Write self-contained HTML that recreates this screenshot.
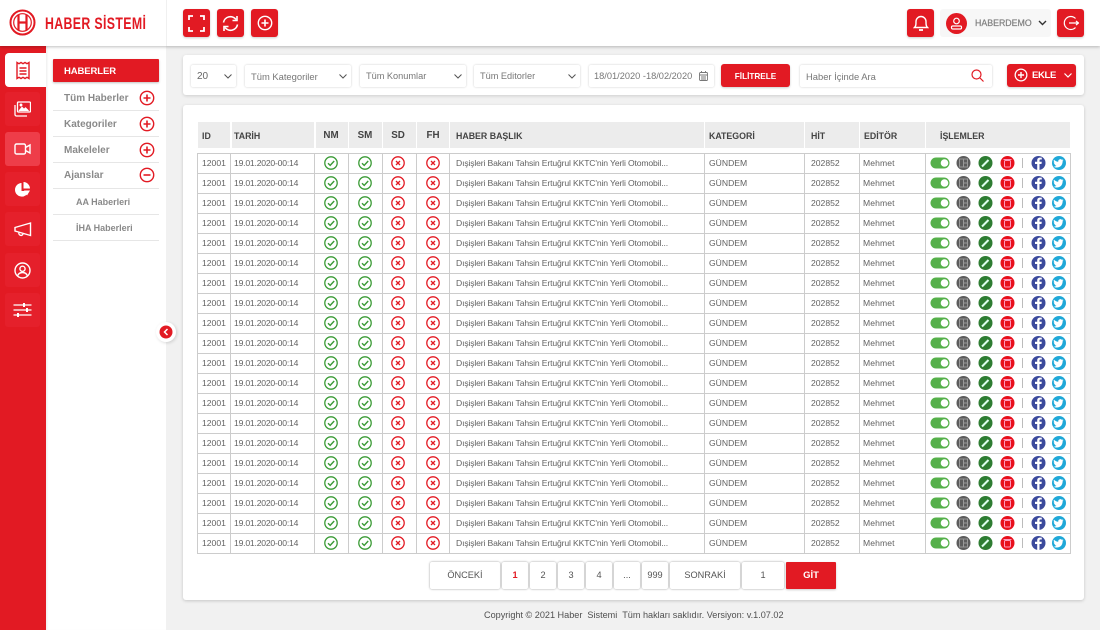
<!DOCTYPE html>
<html lang="tr"><head><meta charset="utf-8"><title>Haber Sistemi</title>
<style>
*{box-sizing:border-box}
html,body{margin:0;padding:0}
body{width:1100px;height:630px;position:relative;overflow:hidden;background:#f1f1f1;font-family:"Liberation Sans",sans-serif;color:#666;font-size:9px}
.a{position:absolute}
.rb{position:absolute;background:#e21a23;border-radius:3px;box-shadow:0 1px 2px rgba(0,0,0,.2);display:flex;align-items:center;justify-content:center}
.f{position:absolute;top:65px;height:22px;background:#fff;border-radius:2px;box-shadow:0 0 2px rgba(0,0,0,.2);line-height:23px;padding-left:6px;font-size:9.2px;color:#777;white-space:nowrap}
.si{position:absolute;left:5px;width:35px;height:34px;background:#e5202b;border-radius:3px;display:flex;align-items:center;justify-content:center}
.m{position:absolute;left:64px;font-size:10px;font-weight:bold;color:#8a8a8a;line-height:14px;white-space:nowrap}
.d{position:absolute;left:53px;width:106px;height:1.5px;background:#e6e6e6}
.th{position:absolute;top:122px;height:26px;background:#ececec;font-weight:bold;font-size:8.8px;line-height:28px;color:#444;white-space:nowrap}
.n{font-size:9.8px}
table{position:absolute;left:197px;top:153px;width:873px;border-collapse:collapse;table-layout:fixed;font-size:8.6px;color:#626262}
td{height:20px;padding:0 0 2px 4px;border:1px solid #ccc;white-space:nowrap;overflow:hidden;line-height:16px}
td.c{padding:0 0 2px 0;text-align:center}
td svg{display:block;margin:auto}
td:nth-child(2){padding-left:3px;letter-spacing:-.2px}
td:nth-child(3) svg,td:nth-child(4) svg{transform:translateX(-1px)}
td:nth-child(5) svg{transform:translateX(-2px)}
td:nth-child(7){padding-left:6px;letter-spacing:-.14px}
td:nth-child(9){padding-left:6px}
td:nth-child(10){padding-left:3px;letter-spacing:.1px}
.p{position:absolute;top:562px;height:27px;background:#fff;border-radius:2px;box-shadow:0 0 2px rgba(0,0,0,.4);text-align:center;line-height:27px;font-size:9.2px;color:#555}
</style></head><body>
<svg width="0" height="0" style="position:absolute">
<symbol id="ok" viewBox="0 0 14 14"><circle cx="7" cy="7" r="6.200" fill="none" stroke="#3a9a35" stroke-width="1.300"/><path d="M4 7.200l2.200 2.200L10.200 5" fill="none" stroke="#3a9a35" stroke-width="1.400"/></symbol>
<symbol id="no" viewBox="0 0 14 14"><circle cx="7" cy="7" r="6.200" fill="none" stroke="#e21a23" stroke-width="1.300"/><path d="M5 5l4 4M9 5l-4 4" fill="none" stroke="#e21a23" stroke-width="1.300"/></symbol>
<symbol id="ops" viewBox="0 0 144 16">
<rect x="4.500" y="2.500" width="19" height="11" rx="5.500" fill="#55b04a"/><circle cx="18.500" cy="8" r="3.800" fill="#fff"/>
<circle cx="37.500" cy="8" r="7" fill="#5c5c5c"/><rect x="33.500" y="4" width="8" height="8" fill="none" stroke="#999" stroke-width="1"/><path d="M37.500 4v8M37.500 8h4" stroke="#999" stroke-width="1"/>
<circle cx="59.500" cy="8" r="7" fill="#2e7d32"/><path d="M56 11.500l6.500-6.500" stroke="#dfe" stroke-width="2"/>
<circle cx="81.500" cy="8" r="7" fill="#e8101c"/><rect x="78.500" y="5.500" width="6" height="6.500" rx="1" fill="none" stroke="#f9b" stroke-width="1"/><path d="M77.500 4.500h8" stroke="#f9b" stroke-width="1"/>
<rect x="96" y="3" width="1" height="10" fill="#bbb"/>
<circle cx="112.500" cy="8" r="7" fill="#3b4a9c"/><path d="M113.500 15v-6h2l.3-2.200h-2.300V5.500c0-.7.300-1 1-1h1.300V2.600h-1.800c-2 0-2.800 1.200-2.800 2.800v1.400H109V9h2.200v6z" fill="#fff"/>
<circle cx="133" cy="8" r="7" fill="#1fa8d8"/><path d="M137.500 5.300c-.4.200-.8.300-1.200.3.400-.3.800-.7.900-1.200-.4.200-.9.400-1.300.5a2.100 2.100 0 0 0-3.600 1.900c-1.700-.1-3.300-.9-4.300-2.200-.6 1-.3 2.200.6 2.800-.3 0-.6-.1-.9-.2 0 1 .7 1.900 1.700 2.100-.3.100-.6.100-.9 0 .3.800 1 1.400 1.900 1.400-.9.700-2 1-3 .9 3.900 2.300 9.300.3 9.200-5.200.3-.2.700-.6.900-1.100z" fill="#fff"/>
</symbol>
<symbol id="plus" viewBox="0 0 16 16"><circle cx="8" cy="8" r="6.700" fill="none" stroke="#e21a23" stroke-width="1.400"/><path d="M4.500 8h7M8 4.500v7" stroke="#e21a23" stroke-width="1.600"/></symbol>
<symbol id="wplus" viewBox="0 0 16 16"><circle cx="8" cy="8" r="6.700" fill="none" stroke="#fff" stroke-width="1.400"/><path d="M4.500 8h7M8 4.500v7" stroke="#fff" stroke-width="1.600"/></symbol>
</svg>

<!-- Sidebar -->
<div class="a" style="left:0;top:46px;width:46px;height:584px;background:#e21a23"></div>
<div class="a" style="left:5px;top:53px;width:41px;height:34px;background:#fff;border-radius:4px 0 0 4px"></div>
<svg class="a" style="left:15px;top:61px" width="16" height="19" viewBox="0 0 16 19" fill="none" stroke="#e21a23" stroke-width="1.400"><path d="M2 1.500l2 1.200 2-1.200 2 1.200 2-1.200 2 1.200 2-1.200v16l-2-1.200-2 1.200-2-1.200-2 1.200-2-1.200-2 1.200z"/><path d="M4.500 7h7M4.500 10h7M4.500 13h7"/></svg>
<div class="si" style="top:92px"><svg width="17" height="16" viewBox="0 0 17 16" fill="none" stroke="#fff" stroke-width="1.300"><rect x="3.500" y="1" width="13" height="10" rx="1"/><path d="M1 4v9.500a1.500 1.500 0 0 0 1.500 1.500H13"/><path d="M5 10l3-3.500 2 2 1.500-1.500 3 3" fill="#fff"/><circle cx="7" cy="4" r=".8" fill="#fff"/></svg></div>
<div class="si" style="top:132px;background:#ee3d49"><svg width="17" height="12" viewBox="0 0 17 12" fill="none" stroke="#fff" stroke-width="1.400"><rect x="1" y="1" width="10.500" height="10" rx="1.500"/><path d="M11.500 4.500L16 2v8l-4.500-2.500"/></svg></div>
<div class="si" style="top:172px"><svg width="17" height="17" viewBox="0 0 17 17"><path d="M7.500 2a6.800 6.800 0 1 0 7 8H7.500z" fill="#fff"/><path d="M9.500 1a6.800 6.800 0 0 1 6.500 6.500H9.500z" fill="#fff"/><path d="M10 9.500h6l-3 5z" fill="#fff"/></svg></div>
<div class="si" style="top:212px"><svg width="18" height="15" viewBox="0 0 18 15" fill="none" stroke="#fff" stroke-width="1.400"><path d="M1 5.500l15.500-4.500v12.500L1 9z"/><path d="M5 10.500a2 2 0 0 0 4 1.500"/></svg></div>
<div class="si" style="top:253px"><svg width="17" height="17" viewBox="0 0 17 17" fill="none" stroke="#fff" stroke-width="1.400"><circle cx="8.500" cy="8.500" r="7.500"/><circle cx="8.500" cy="6.800" r="2.600"/><path d="M3.500 14c1-3 3-3.500 5-3.500s4 .5 5 3.500"/></svg></div>
<div class="si" style="top:293px"><svg width="19" height="16" viewBox="0 0 19 16" stroke="#fff" stroke-width="1.300"><path d="M.5 3h18M.5 8h18M.5 13h18"/><path d="M11 1v4M14 6v4M5 11v4" stroke-width="2"/></svg></div>

<!-- Sub panel -->
<div class="a" style="left:46px;top:46px;width:120px;height:584px;background:#fff;box-shadow:inset 2px 0 2px -1px rgba(0,0,0,.08)"></div>
<div class="a" style="left:53px;top:59px;width:106px;height:23px;background:#e21a23;border-radius:1px;box-shadow:0 1px 2px rgba(0,0,0,.25);color:#fff;font-weight:bold;font-size:9.500px;letter-spacing:-.1px;line-height:25px;padding-left:11px">HABERLER</div>
<div class="m" style="top:92px">Tüm Haberler</div><svg class="a" style="left:139px;top:90px" width="16" height="16"><use href="#plus"/></svg><div class="d" style="top:109.500px"></div>
<div class="m" style="top:118px">Kategoriler</div><svg class="a" style="left:139px;top:116px" width="16" height="16"><use href="#plus"/></svg><div class="d" style="top:135.500px"></div>
<div class="m" style="top:144px">Makeleler</div><svg class="a" style="left:139px;top:142px" width="16" height="16"><use href="#plus"/></svg><div class="d" style="top:161.500px"></div>
<div class="m" style="top:169px">Ajanslar</div><svg class="a" style="left:139px;top:167px" width="16" height="16" viewBox="0 0 16 16"><circle cx="8" cy="8" r="6.700" fill="none" stroke="#e21a23" stroke-width="1.400"/><path d="M4.500 8h7" stroke="#e21a23" stroke-width="1.600"/></svg><div class="d" style="top:187.500px"></div>
<div class="m" style="left:76px;top:195px;font-size:9px">AA Haberleri</div><div class="d" style="top:213.500px"></div>
<div class="m" style="left:76px;top:221px;font-size:9px">İHA Haberleri</div><div class="d" style="top:239.500px"></div>
<div class="a" style="left:156px;top:322px;width:20px;height:20px;border-radius:50%;background:#fff;box-shadow:1px 1px 3px rgba(0,0,0,.15)"></div>
<svg class="a" style="left:159px;top:325px" width="14" height="14" viewBox="0 0 14 14"><circle cx="7" cy="7" r="6.500" fill="#e21a23"/><path d="M8.500 4L5.500 7l3 3" fill="none" stroke="#fff" stroke-width="1.500"/></svg>

<!-- Header -->
<div class="a" style="left:0;top:0;width:1100px;height:46px;background:#fff;box-shadow:0 1px 3px rgba(0,0,0,.25)"></div>
<div class="a" style="left:166px;top:0;width:1px;height:46px;background:#f0f0f0"></div>
<svg class="a" style="left:9px;top:9px" width="27" height="27" viewBox="0 0 27 27" fill="none" stroke="#e21a23"><circle cx="13.500" cy="13.500" r="12" stroke-width="2"/><circle cx="13.500" cy="13.500" r="8.800" stroke-width="1.200"/><path d="M9.500 5.500v16M17.500 5.500v16M9.500 13.500h8" stroke-width="2.200"/></svg>
<div class="a" style="left:45px;top:14px;font-size:17px;line-height:20px;font-weight:bold;color:#e21a23;white-space:nowrap;transform:scaleX(.725);transform-origin:0 0;letter-spacing:.5px">HABER SİSTEMİ</div>
<div class="rb" style="left:183px;top:9px;width:27px;height:28px"><svg width="17" height="17" viewBox="0 0 17 17" fill="none" stroke="#fff" stroke-width="1.800"><path d="M1 5V1h4M12 1h4v4M16 12v4h-4M5 16H1v-4"/></svg></div>
<div class="rb" style="left:217px;top:9px;width:27px;height:28px"><svg width="17" height="17" viewBox="0 0 17 17" fill="none" stroke="#fff" stroke-width="1.600"><path d="M1.500 7.500A7 7 0 0 1 14 4.500M15.500 9.500A7 7 0 0 1 3 12.500"/><path d="M15 1v4.500h-4.500M2 16v-4.500h4.500"/></svg></div>
<div class="rb" style="left:251px;top:9px;width:27px;height:28px"><svg width="16" height="16"><use href="#wplus"/></svg></div>
<div class="rb" style="left:907px;top:9px;width:27px;height:28px"><svg width="16" height="18" viewBox="0 0 16 18" fill="none" stroke="#fff" stroke-width="1.400"><path d="M1.500 13.500c1.500-1.500 1.500-3 1.500-6a5 5 0 0 1 10 0c0 3 0 4.500 1.500 6z"/><path d="M6 16h4" stroke-width="1.800"/></svg></div>
<div class="a" style="left:940px;top:9px;width:111px;height:28px;background:#f7f7f7;border-radius:3px"></div>
<svg class="a" style="left:946px;top:13px" width="21" height="21" viewBox="0 0 21 21"><circle cx="10.500" cy="10.500" r="10.500" fill="#e21a23"/><g fill="none" stroke="#fff" stroke-width="1.200"><circle cx="10.500" cy="8" r="2.800"/><rect x="5.500" y="13" width="10" height="3" rx="1.200"/></g></svg>
<div class="a" style="left:975px;top:17px;font-size:8.800px;line-height:13px;color:#808080;-webkit-text-stroke:.2px #808080">HABERDEMO</div>
<svg class="a" style="left:1038px;top:20px" width="9" height="6" viewBox="0 0 9 6"><path d="M1 1l3.500 3.500L8 1" fill="none" stroke="#333" stroke-width="1.400"/></svg>
<div class="rb" style="left:1057px;top:9px;width:27px;height:28px"><svg width="16" height="16" viewBox="0 0 16 16" fill="none" stroke="#fff" stroke-width="1.200"><path d="M12.500 3.500a6.500 6.500 0 1 0 0 9"/><path d="M6 8h9.500M13 6l2.500 2-2.500 2"/></svg></div>

<!-- Filter card -->
<div class="a" style="left:183px;top:55px;width:901px;height:40px;background:#fff;border-radius:3px;box-shadow:0 1px 3px rgba(0,0,0,.15)"></div>
<div class="f" style="left:191px;width:45px;font-size:10px;color:#666">20</div>
<div class="f" style="left:245px;width:106px;font-size:9.400px">Tüm Kategoriler</div>
<div class="f" style="left:360px;width:106px">Tüm Konumlar</div>
<div class="f" style="left:474px;width:106px">Tüm Editorler</div>
<svg class="a" style="left:224px;top:74px" width="8" height="5" viewBox="0 0 8 5"><path d="M.5.500L4 4 7.500.500" fill="none" stroke="#555"/></svg>
<svg class="a" style="left:339px;top:74px" width="8" height="5" viewBox="0 0 8 5"><path d="M.5.500L4 4 7.500.500" fill="none" stroke="#555"/></svg>
<svg class="a" style="left:454px;top:74px" width="8" height="5" viewBox="0 0 8 5"><path d="M.5.500L4 4 7.500.500" fill="none" stroke="#555"/></svg>
<svg class="a" style="left:568px;top:74px" width="8" height="5" viewBox="0 0 8 5"><path d="M.5.500L4 4 7.500.500" fill="none" stroke="#555"/></svg>
<div class="f" style="left:589px;width:125px;padding-left:5px;font-size:9.250px">18/01/2020 -18/02/2020</div>
<svg class="a" style="left:699px;top:71px" width="9" height="10" viewBox="0 0 9 10" fill="none" stroke="#777" stroke-width=".9"><rect x=".5" y="1.500" width="8" height="8" rx="1"/><path d="M.5 4h8M2.500 0v2M6.500 0v2M2 6h5M2 8h5"/></svg>
<div class="rb" style="left:721px;top:64px;width:69px;height:23px;color:#fff;font-weight:bold;font-size:8.200px;padding-top:1px">FİLİTRELE</div>
<div class="f" style="left:800px;width:192px;font-size:9.400px">Haber İçinde Ara</div>
<svg class="a" style="left:971px;top:69px" width="13" height="13" viewBox="0 0 13 13" fill="none" stroke="#e21a23" stroke-width="1.200"><circle cx="5.500" cy="5.500" r="4.500"/><path d="M9 9l3.500 3.500"/></svg>
<div class="rb" style="left:1007px;top:64px;width:69px;height:23px"></div>
<svg class="a" style="left:1014px;top:68px" width="14" height="14"><use href="#wplus"/></svg>
<div class="a" style="left:1032px;top:69px;color:#fff;font-weight:bold;font-size:9.500px;letter-spacing:-.35px;line-height:13px">EKLE</div>
<svg class="a" style="left:1064px;top:73px" width="8" height="5" viewBox="0 0 8 5"><path d="M.5.500L4 4 7.500.500" fill="none" stroke="#fff" stroke-width="1.200"/></svg>

<!-- Table card -->
<div class="a" style="left:183px;top:105px;width:901px;height:495px;background:#fff;border-radius:3px;box-shadow:0 1px 3px rgba(0,0,0,.18)"></div>
<div class="th" style="left:198px;width:32px;padding-left:4px">ID</div>
<div class="th" style="left:232px;width:82px;padding-left:2px">TARİH</div>
<div class="th n" style="left:316px;width:32px;text-align:center;padding-right:2px">NM</div>
<div class="th n" style="left:349px;width:33px;text-align:center;padding-right:1px">SM</div>
<div class="th n" style="left:383px;width:33px;text-align:center;padding-right:3px">SD</div>
<div class="th n" style="left:417px;width:32px;text-align:center">FH</div>
<div class="th" style="left:450px;width:254px;padding-left:6px">HABER BAŞLIK</div>
<div class="th" style="left:705px;width:99px;padding-left:4px">KATEGORİ</div>
<div class="th" style="left:805px;width:54px;padding-left:6px">HİT</div>
<div class="th" style="left:860px;width:65px;padding-left:4px">EDİTÖR</div>
<div class="th" style="left:926px;width:144px;padding-left:14px">İŞLEMLER</div>

<table><colgroup><col style="width:33px"><col style="width:84px"><col style="width:34px"><col style="width:34px"><col style="width:34px"><col style="width:33px"><col style="width:255px"><col style="width:100px"><col style="width:55px"><col style="width:66px"><col style="width:145px"></colgroup><tbody>
<tr><td>12001</td><td>19.01.2020-00:14</td><td class="c"><svg width="14" height="14"><use href="#ok"/></svg></td><td class="c"><svg width="14" height="14"><use href="#ok"/></svg></td><td class="c"><svg width="14" height="14"><use href="#no"/></svg></td><td class="c"><svg width="14" height="14"><use href="#no"/></svg></td><td>Dışişleri Bakanı Tahsin Ertuğrul KKTC'nin Yerli Otomobil...</td><td>GÜNDEM</td><td>202852</td><td>Mehmet</td><td class="c"><svg width="144" height="16"><use href="#ops"/></svg></td></tr>
<tr><td>12001</td><td>19.01.2020-00:14</td><td class="c"><svg width="14" height="14"><use href="#ok"/></svg></td><td class="c"><svg width="14" height="14"><use href="#ok"/></svg></td><td class="c"><svg width="14" height="14"><use href="#no"/></svg></td><td class="c"><svg width="14" height="14"><use href="#no"/></svg></td><td>Dışişleri Bakanı Tahsin Ertuğrul KKTC'nin Yerli Otomobil...</td><td>GÜNDEM</td><td>202852</td><td>Mehmet</td><td class="c"><svg width="144" height="16"><use href="#ops"/></svg></td></tr>
<tr><td>12001</td><td>19.01.2020-00:14</td><td class="c"><svg width="14" height="14"><use href="#ok"/></svg></td><td class="c"><svg width="14" height="14"><use href="#ok"/></svg></td><td class="c"><svg width="14" height="14"><use href="#no"/></svg></td><td class="c"><svg width="14" height="14"><use href="#no"/></svg></td><td>Dışişleri Bakanı Tahsin Ertuğrul KKTC'nin Yerli Otomobil...</td><td>GÜNDEM</td><td>202852</td><td>Mehmet</td><td class="c"><svg width="144" height="16"><use href="#ops"/></svg></td></tr>
<tr><td>12001</td><td>19.01.2020-00:14</td><td class="c"><svg width="14" height="14"><use href="#ok"/></svg></td><td class="c"><svg width="14" height="14"><use href="#ok"/></svg></td><td class="c"><svg width="14" height="14"><use href="#no"/></svg></td><td class="c"><svg width="14" height="14"><use href="#no"/></svg></td><td>Dışişleri Bakanı Tahsin Ertuğrul KKTC'nin Yerli Otomobil...</td><td>GÜNDEM</td><td>202852</td><td>Mehmet</td><td class="c"><svg width="144" height="16"><use href="#ops"/></svg></td></tr>
<tr><td>12001</td><td>19.01.2020-00:14</td><td class="c"><svg width="14" height="14"><use href="#ok"/></svg></td><td class="c"><svg width="14" height="14"><use href="#ok"/></svg></td><td class="c"><svg width="14" height="14"><use href="#no"/></svg></td><td class="c"><svg width="14" height="14"><use href="#no"/></svg></td><td>Dışişleri Bakanı Tahsin Ertuğrul KKTC'nin Yerli Otomobil...</td><td>GÜNDEM</td><td>202852</td><td>Mehmet</td><td class="c"><svg width="144" height="16"><use href="#ops"/></svg></td></tr>
<tr><td>12001</td><td>19.01.2020-00:14</td><td class="c"><svg width="14" height="14"><use href="#ok"/></svg></td><td class="c"><svg width="14" height="14"><use href="#ok"/></svg></td><td class="c"><svg width="14" height="14"><use href="#no"/></svg></td><td class="c"><svg width="14" height="14"><use href="#no"/></svg></td><td>Dışişleri Bakanı Tahsin Ertuğrul KKTC'nin Yerli Otomobil...</td><td>GÜNDEM</td><td>202852</td><td>Mehmet</td><td class="c"><svg width="144" height="16"><use href="#ops"/></svg></td></tr>
<tr><td>12001</td><td>19.01.2020-00:14</td><td class="c"><svg width="14" height="14"><use href="#ok"/></svg></td><td class="c"><svg width="14" height="14"><use href="#ok"/></svg></td><td class="c"><svg width="14" height="14"><use href="#no"/></svg></td><td class="c"><svg width="14" height="14"><use href="#no"/></svg></td><td>Dışişleri Bakanı Tahsin Ertuğrul KKTC'nin Yerli Otomobil...</td><td>GÜNDEM</td><td>202852</td><td>Mehmet</td><td class="c"><svg width="144" height="16"><use href="#ops"/></svg></td></tr>
<tr><td>12001</td><td>19.01.2020-00:14</td><td class="c"><svg width="14" height="14"><use href="#ok"/></svg></td><td class="c"><svg width="14" height="14"><use href="#ok"/></svg></td><td class="c"><svg width="14" height="14"><use href="#no"/></svg></td><td class="c"><svg width="14" height="14"><use href="#no"/></svg></td><td>Dışişleri Bakanı Tahsin Ertuğrul KKTC'nin Yerli Otomobil...</td><td>GÜNDEM</td><td>202852</td><td>Mehmet</td><td class="c"><svg width="144" height="16"><use href="#ops"/></svg></td></tr>
<tr><td>12001</td><td>19.01.2020-00:14</td><td class="c"><svg width="14" height="14"><use href="#ok"/></svg></td><td class="c"><svg width="14" height="14"><use href="#ok"/></svg></td><td class="c"><svg width="14" height="14"><use href="#no"/></svg></td><td class="c"><svg width="14" height="14"><use href="#no"/></svg></td><td>Dışişleri Bakanı Tahsin Ertuğrul KKTC'nin Yerli Otomobil...</td><td>GÜNDEM</td><td>202852</td><td>Mehmet</td><td class="c"><svg width="144" height="16"><use href="#ops"/></svg></td></tr>
<tr><td>12001</td><td>19.01.2020-00:14</td><td class="c"><svg width="14" height="14"><use href="#ok"/></svg></td><td class="c"><svg width="14" height="14"><use href="#ok"/></svg></td><td class="c"><svg width="14" height="14"><use href="#no"/></svg></td><td class="c"><svg width="14" height="14"><use href="#no"/></svg></td><td>Dışişleri Bakanı Tahsin Ertuğrul KKTC'nin Yerli Otomobil...</td><td>GÜNDEM</td><td>202852</td><td>Mehmet</td><td class="c"><svg width="144" height="16"><use href="#ops"/></svg></td></tr>
<tr><td>12001</td><td>19.01.2020-00:14</td><td class="c"><svg width="14" height="14"><use href="#ok"/></svg></td><td class="c"><svg width="14" height="14"><use href="#ok"/></svg></td><td class="c"><svg width="14" height="14"><use href="#no"/></svg></td><td class="c"><svg width="14" height="14"><use href="#no"/></svg></td><td>Dışişleri Bakanı Tahsin Ertuğrul KKTC'nin Yerli Otomobil...</td><td>GÜNDEM</td><td>202852</td><td>Mehmet</td><td class="c"><svg width="144" height="16"><use href="#ops"/></svg></td></tr>
<tr><td>12001</td><td>19.01.2020-00:14</td><td class="c"><svg width="14" height="14"><use href="#ok"/></svg></td><td class="c"><svg width="14" height="14"><use href="#ok"/></svg></td><td class="c"><svg width="14" height="14"><use href="#no"/></svg></td><td class="c"><svg width="14" height="14"><use href="#no"/></svg></td><td>Dışişleri Bakanı Tahsin Ertuğrul KKTC'nin Yerli Otomobil...</td><td>GÜNDEM</td><td>202852</td><td>Mehmet</td><td class="c"><svg width="144" height="16"><use href="#ops"/></svg></td></tr>
<tr><td>12001</td><td>19.01.2020-00:14</td><td class="c"><svg width="14" height="14"><use href="#ok"/></svg></td><td class="c"><svg width="14" height="14"><use href="#ok"/></svg></td><td class="c"><svg width="14" height="14"><use href="#no"/></svg></td><td class="c"><svg width="14" height="14"><use href="#no"/></svg></td><td>Dışişleri Bakanı Tahsin Ertuğrul KKTC'nin Yerli Otomobil...</td><td>GÜNDEM</td><td>202852</td><td>Mehmet</td><td class="c"><svg width="144" height="16"><use href="#ops"/></svg></td></tr>
<tr><td>12001</td><td>19.01.2020-00:14</td><td class="c"><svg width="14" height="14"><use href="#ok"/></svg></td><td class="c"><svg width="14" height="14"><use href="#ok"/></svg></td><td class="c"><svg width="14" height="14"><use href="#no"/></svg></td><td class="c"><svg width="14" height="14"><use href="#no"/></svg></td><td>Dışişleri Bakanı Tahsin Ertuğrul KKTC'nin Yerli Otomobil...</td><td>GÜNDEM</td><td>202852</td><td>Mehmet</td><td class="c"><svg width="144" height="16"><use href="#ops"/></svg></td></tr>
<tr><td>12001</td><td>19.01.2020-00:14</td><td class="c"><svg width="14" height="14"><use href="#ok"/></svg></td><td class="c"><svg width="14" height="14"><use href="#ok"/></svg></td><td class="c"><svg width="14" height="14"><use href="#no"/></svg></td><td class="c"><svg width="14" height="14"><use href="#no"/></svg></td><td>Dışişleri Bakanı Tahsin Ertuğrul KKTC'nin Yerli Otomobil...</td><td>GÜNDEM</td><td>202852</td><td>Mehmet</td><td class="c"><svg width="144" height="16"><use href="#ops"/></svg></td></tr>
<tr><td>12001</td><td>19.01.2020-00:14</td><td class="c"><svg width="14" height="14"><use href="#ok"/></svg></td><td class="c"><svg width="14" height="14"><use href="#ok"/></svg></td><td class="c"><svg width="14" height="14"><use href="#no"/></svg></td><td class="c"><svg width="14" height="14"><use href="#no"/></svg></td><td>Dışişleri Bakanı Tahsin Ertuğrul KKTC'nin Yerli Otomobil...</td><td>GÜNDEM</td><td>202852</td><td>Mehmet</td><td class="c"><svg width="144" height="16"><use href="#ops"/></svg></td></tr>
<tr><td>12001</td><td>19.01.2020-00:14</td><td class="c"><svg width="14" height="14"><use href="#ok"/></svg></td><td class="c"><svg width="14" height="14"><use href="#ok"/></svg></td><td class="c"><svg width="14" height="14"><use href="#no"/></svg></td><td class="c"><svg width="14" height="14"><use href="#no"/></svg></td><td>Dışişleri Bakanı Tahsin Ertuğrul KKTC'nin Yerli Otomobil...</td><td>GÜNDEM</td><td>202852</td><td>Mehmet</td><td class="c"><svg width="144" height="16"><use href="#ops"/></svg></td></tr>
<tr><td>12001</td><td>19.01.2020-00:14</td><td class="c"><svg width="14" height="14"><use href="#ok"/></svg></td><td class="c"><svg width="14" height="14"><use href="#ok"/></svg></td><td class="c"><svg width="14" height="14"><use href="#no"/></svg></td><td class="c"><svg width="14" height="14"><use href="#no"/></svg></td><td>Dışişleri Bakanı Tahsin Ertuğrul KKTC'nin Yerli Otomobil...</td><td>GÜNDEM</td><td>202852</td><td>Mehmet</td><td class="c"><svg width="144" height="16"><use href="#ops"/></svg></td></tr>
<tr><td>12001</td><td>19.01.2020-00:14</td><td class="c"><svg width="14" height="14"><use href="#ok"/></svg></td><td class="c"><svg width="14" height="14"><use href="#ok"/></svg></td><td class="c"><svg width="14" height="14"><use href="#no"/></svg></td><td class="c"><svg width="14" height="14"><use href="#no"/></svg></td><td>Dışişleri Bakanı Tahsin Ertuğrul KKTC'nin Yerli Otomobil...</td><td>GÜNDEM</td><td>202852</td><td>Mehmet</td><td class="c"><svg width="144" height="16"><use href="#ops"/></svg></td></tr>
<tr><td>12001</td><td>19.01.2020-00:14</td><td class="c"><svg width="14" height="14"><use href="#ok"/></svg></td><td class="c"><svg width="14" height="14"><use href="#ok"/></svg></td><td class="c"><svg width="14" height="14"><use href="#no"/></svg></td><td class="c"><svg width="14" height="14"><use href="#no"/></svg></td><td>Dışişleri Bakanı Tahsin Ertuğrul KKTC'nin Yerli Otomobil...</td><td>GÜNDEM</td><td>202852</td><td>Mehmet</td><td class="c"><svg width="144" height="16"><use href="#ops"/></svg></td></tr>
</tbody></table>

<!-- Pagination -->
<div class="p" style="left:430px;width:70px">ÖNCEKİ</div>
<div class="p" style="left:502px;width:26px;color:#e21a23;font-weight:bold">1</div>
<div class="p" style="left:530px;width:26px">2</div>
<div class="p" style="left:558px;width:26px">3</div>
<div class="p" style="left:586px;width:26px">4</div>
<div class="p" style="left:614px;width:26px">...</div>
<div class="p" style="left:642px;width:26px">999</div>
<div class="p" style="left:670px;width:70px">SONRAKİ</div>
<div class="p" style="left:742px;width:42px">1</div>
<div class="rb" style="left:786px;top:562px;width:50px;height:27px;color:#fff;font-weight:bold;font-size:9.500px;border-radius:1px">GİT</div>

<div class="a" style="left:484px;top:609px;width:310px;font-size:9.120px;line-height:13px;color:#505050;white-space:nowrap">Copyright © 2021 Haber&nbsp; Sistemi&nbsp; Tüm hakları saklıdır. Versiyon: v.1.07.02</div>
</body></html>
